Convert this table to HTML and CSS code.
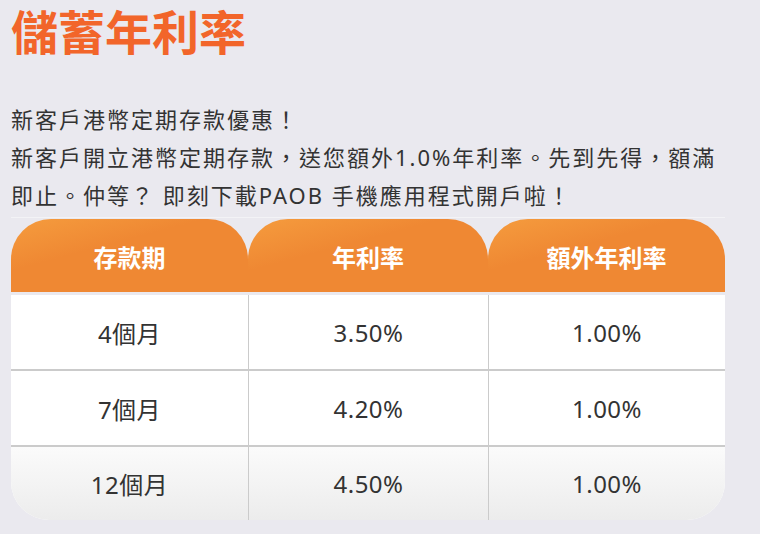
FILE: index.html
```html
<!DOCTYPE html>
<html lang="zh-Hant">
<head>
<meta charset="utf-8">
<title>儲蓄年利率</title>
<link rel="stylesheet" href="styles.css">
</head>
<body>
<main class="page">
  <h1 class="title">儲蓄年利率</h1>
  <p class="intro">新客戶港幣定期存款優惠！<br>新客戶開立港幣定期存款，送您額外1.0%年利率。先到先得，額滿即止。仲等？ 即刻下載PAOB 手機應用程式開戶啦！</p>
  <section class="rates">
    <div class="head">
      <div class="head-cell">存款期</div>
      <div class="head-cell">年利率</div>
      <div class="head-cell">額外年利率</div>
    </div>
    <div class="body">
      <div class="row">
        <div class="cell">4個月</div>
        <div class="cell">3.50%</div>
        <div class="cell">1.00%</div>
      </div>
      <div class="row">
        <div class="cell">7個月</div>
        <div class="cell">4.20%</div>
        <div class="cell">1.00%</div>
      </div>
      <div class="row row-last">
        <div class="cell">12個月</div>
        <div class="cell">4.50%</div>
        <div class="cell">1.00%</div>
      </div>
    </div>
  </section>
</main>
</body>
</html>
```
FILE: styles.css
```css
html, body {
  margin: 0;
  padding: 0;
  background: #eae9ef;
}

body {
  font-family: "Noto Sans", "Noto Sans CJK TC", sans-serif;
  color: #333333;
}

.page {
  width: 714px;
  padding-left: 11px;
}

.title {
  margin: 0;
  padding-top: 1px;
  font-family: "Noto Sans CJK TC", sans-serif;
  font-size: 47px;
  line-height: 58px;
  font-weight: 700;
  color: #f2652a;
}

.intro {
  margin: 41px 0 0;
  font-size: 22px;
  letter-spacing: 2px;
  line-height: 38px;
  color: #333333;
}

.rates {
  margin-top: 3px;
  border-top: 1px solid #f3f3f6;
  padding-top: 1px;
}

.head {
  display: grid;
  grid-template-columns: 237px 240px 237px;
  height: 73px;
}

.head-cell {
  display: flex;
  align-items: center;
  justify-content: center;
  border-radius: 40px 40px 0 0;
  background: linear-gradient(165deg, #f59c3e 0%, #ef8833 38%, #ef8833 100%);
  color: #ffffff;
  font-family: "Noto Sans CJK TC", sans-serif;
  font-weight: 700;
  font-size: 24px;
  padding-top: 1px;
}

.body {
  margin-top: 3px;
  background: #ffffff;
  border-radius: 0 0 38px 38px;
  overflow: hidden;
}

.row {
  display: grid;
  grid-template-columns: 237px 240px 237px;
  height: 74px;
  border-bottom: 2px solid #cbcbcb;
}

.row-last {
  height: 73px;
  border-bottom: none;
  background: linear-gradient(180deg, #fbfbfb 0%, #ececec 100%);
}

.cell {
  display: flex;
  align-items: center;
  justify-content: center;
  font-size: 24px;
  letter-spacing: 0.5px;
  color: #333333;
}

.cell + .cell {
  border-left: 1px solid #cbcbcb;
}
```
